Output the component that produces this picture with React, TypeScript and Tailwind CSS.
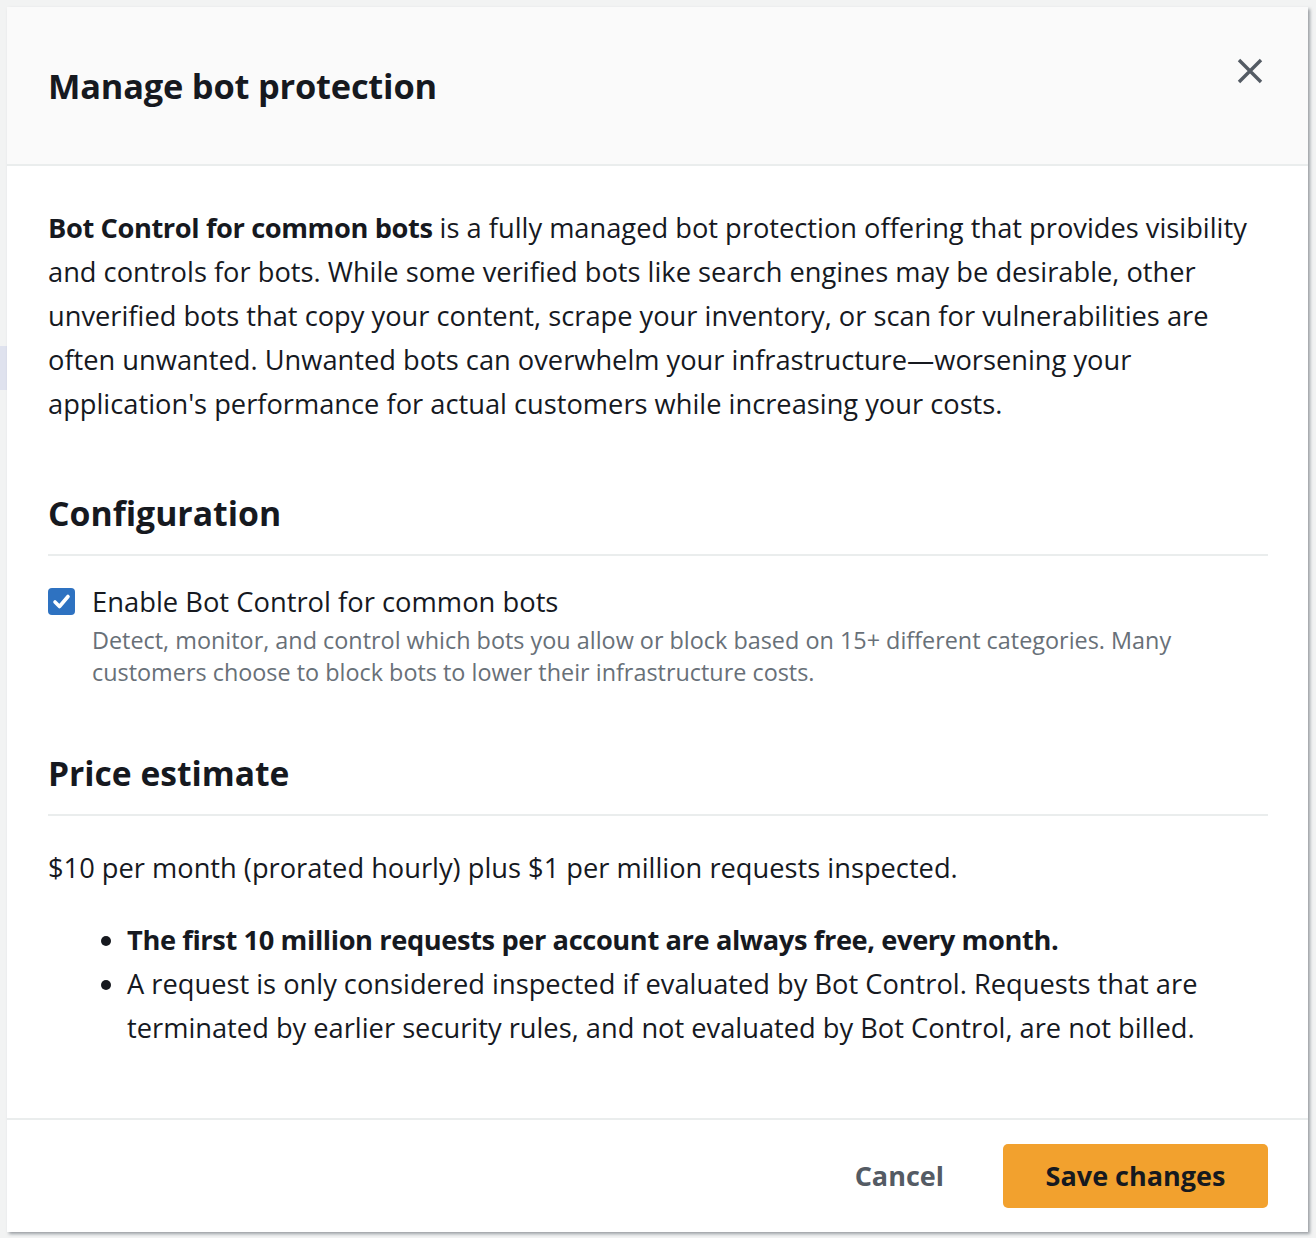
import { useState } from "react";

export default function App() {
  const [enabled, setEnabled] = useState(true);

  return (
    <div className="relative min-h-screen bg-[#f2f3f3] pl-[7px] pt-[7px] font-['Open_Sans',sans-serif] text-[#16191f]">
      {/* faint page behind the overlay */}
      <div className="absolute left-0 top-[346px] h-[44px] w-[7px] bg-[#dfe2ee]" />

      <div className="relative flex h-[1225px] w-[1301px] flex-col bg-white shadow-[2px_2px_3px_rgba(84,91,100,0.55)]">
        {/* header */}
        <div className="flex h-[159px] items-start justify-between border-b-2 border-[#eaeded] bg-[#fafafa] pl-[41px] pr-[45px]">
          <h1 className="mt-[57px] text-[34.4px] font-bold leading-[44px] tracking-[-0.2px]">Manage bot protection</h1>
          <button className="mt-[51px] h-[26px] w-[26px]" aria-label="Close">
            <svg viewBox="0 0 26 26" width="26" height="26" fill="none" stroke="#545b64" strokeWidth="3.4">
              <path d="M2 2L24 24M24 2L2 24" />
            </svg>
          </button>
        </div>

        {/* body */}
        <div className="flex-1 pl-[41px] pr-[40px] pt-[40px]">
          <p className="text-[27.25px] leading-[44px]">
            <b className="font-bold tracking-[-0.4px]">Bot Control for common bots</b> is a fully managed bot protection offering that
            provides visibility and controls for bots. While some verified bots like search engines may be desirable, other unverified
            bots that copy your content, scrape your inventory, or scan for vulnerabilities are often unwanted. Unwanted bots can
            overwhelm your infrastructure—worsening your application's performance for actual customers while increasing your costs.
          </p>

          <h2 className="mt-[67px] border-b-2 border-[#eaeded] pb-[21px] text-[33.8px] font-bold leading-[40px]">Configuration</h2>

          <div className="mt-[26px] flex items-start">
            <button
              onClick={() => setEnabled(!enabled)}
              className={
                enabled
                  ? "mt-[6px] flex h-[27px] w-[27px] shrink-0 items-center justify-center rounded-[4px] bg-[#2e72c1]"
                  : "mt-[6px] flex h-[27px] w-[27px] shrink-0 items-center justify-center rounded-[4px] border-2 border-[#879596] bg-white"
              }
            >
              {enabled && (
                <svg viewBox="0 0 27 27" width="27" height="27" fill="none" stroke="white" strokeWidth="3.6" strokeLinecap="round" strokeLinejoin="round">
                  <path d="M7 14L11.5 18.5L20 8.5" />
                </svg>
              )}
            </button>
            <div className="ml-[17px] pt-[2px]">
              <div className="text-[27.35px] leading-[36px]">Enable Bot Control for common bots</div>
              <div className="mt-[4px] text-[23.4px] leading-[32px] text-[#687078]">
                Detect, monitor, and control which bots you allow or block based on 15+ different categories. Many customers choose
                to block bots to lower their infrastructure costs.
              </div>
            </div>
          </div>

          <h2 className="mt-[65px] border-b-2 border-[#eaeded] pb-[21px] text-[33.6px] font-bold leading-[40px]">Price estimate</h2>

          <p className="mt-[30px] text-[27.25px] leading-[44px]">
            $10 per month (prorated hourly) plus $1 per million requests inspected.
          </p>

          <ul className="mt-[28px] list-disc pl-[79px] text-[27.25px] leading-[44px]">
            <li className="font-bold tracking-[-0.4px]">The first 10 million requests per account are always free, every month.</li>
            <li>
              A request is only considered inspected if evaluated by Bot Control. Requests that are terminated by earlier security
              rules, and not evaluated by Bot Control, are not billed.
            </li>
          </ul>
        </div>

        {/* footer */}
        <div className="flex h-[114px] items-center justify-end gap-[59px] border-t-2 border-[#eaeded] pr-[40px]">
          <button className="text-[27px] font-bold text-[#545b64]">Cancel</button>
          <button className="h-[64px] w-[265px] rounded-[5px] bg-[#f2a12e] text-[27px] font-bold text-[#16191f]">Save changes</button>
        </div>
      </div>
    </div>
  );
}
